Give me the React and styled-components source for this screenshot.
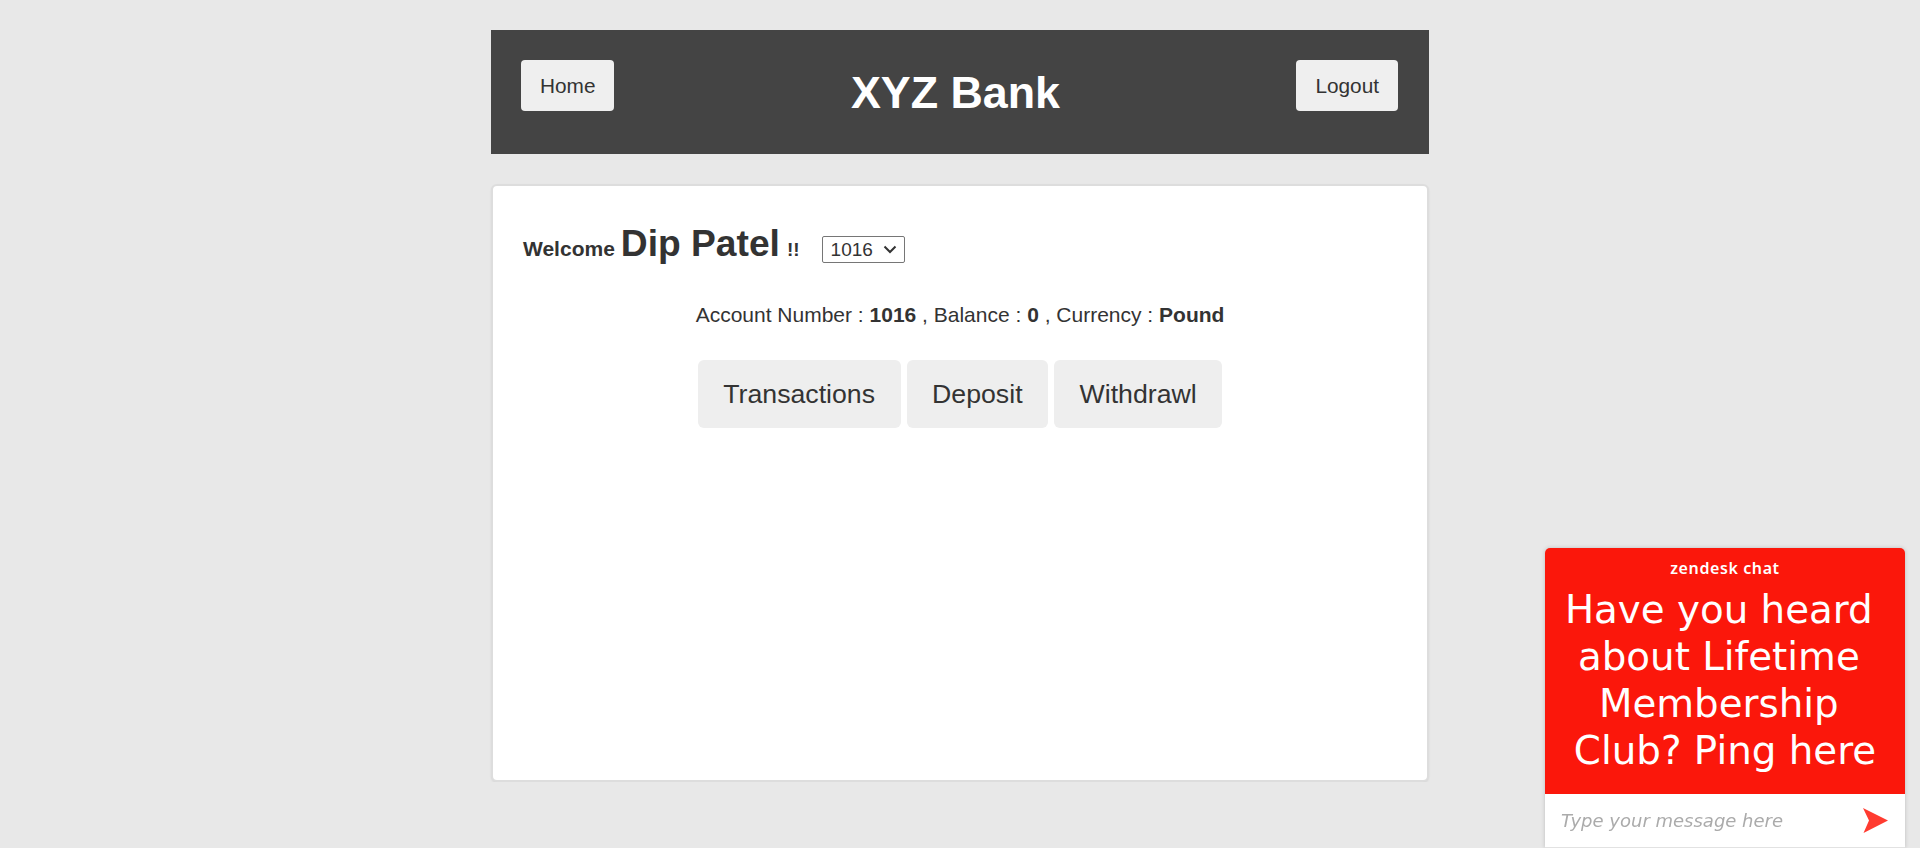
import React from "react";
import styled, { createGlobalStyle } from "styled-components";

const GlobalStyle = createGlobalStyle`
  html, body {
    margin: 0;
    padding: 0;
    background: #e8e8e8;
    font-family: "Liberation Sans", Arial, sans-serif;
    color: #333;
  }
`;

const Page = styled.div`
  width: 938px;
  margin: 30px auto 0;
`;

const Header = styled.header`
  height: 124px;
  background: #444444;
  display: flex;
  align-items: flex-start;
  padding: 30px 31px 0 30px;
  box-sizing: border-box;
`;

const HeaderButton = styled.button`
  height: 51px;
  padding: 0 19px;
  border: none;
  border-radius: 4px;
  background: #efefef;
  color: #333;
  font-family: "Liberation Sans", Arial, sans-serif;
  font-size: 20.8px;
  cursor: pointer;
`;

const Title = styled.h1`
  flex: 1;
  margin: 0;
  align-self: center;
  margin-top: -30px;
  text-align: center;
  color: #fff;
  font-size: 44.8px;
  font-weight: 700;
`;

const Card = styled.main`
  margin-top: 30px;
  height: 598px;
  box-sizing: border-box;
  background: #fff;
  border: 2px solid #dddddd;
  border-radius: 6px;
  box-shadow: 0 1px 2px rgba(0, 0, 0, 0.08);
  padding: 36px 30px;
`;

const WelcomeRow = styled.div`
  display: flex;
  align-items: baseline;
  font-weight: 700;
`;

const Small = styled.span`
  font-size: ${(p) => p.$size || 20}px;
  margin-right: ${(p) => p.$gap || 0}px;
`;

const Name = styled.span`
  font-size: 37.2px;
  margin-right: 7px;
`;

const chevron =
  "data:image/svg+xml;utf8,<svg xmlns='http://www.w3.org/2000/svg' width='14' height='9' viewBox='0 0 14 9'><polyline points='1.5,1.5 7,7 12.5,1.5' fill='none' stroke='%23333' stroke-width='2'/></svg>";

const AccountSelect = styled.select`
  appearance: none;
  -webkit-appearance: none;
  margin-left: 22px;
  width: 83px;
  height: 27px;
  box-sizing: border-box;
  font-family: "Liberation Sans", Arial, sans-serif;
  font-size: 19px;
  font-weight: 400;
  color: #333;
  background: #fff url("${chevron}") no-repeat right 7px center;
  border: 1px solid #767676;
  border-radius: 2px;
  padding: 0 0 0 8px;
`;

const Center = styled.div`
  display: flex;
  flex-direction: column;
  align-items: center;
  margin-top: 38px;
`;

const Info = styled.div`
  font-size: 21px;
  color: #333;
`;

const ActionRow = styled.div`
  display: flex;
  gap: 6px;
  margin-top: 33px;
`;

const ActionButton = styled.button`
  height: 68px;
  padding: 0 25.5px;
  border: none;
  border-radius: 6px;
  background: #eeeeee;
  color: #333;
  font-family: "Liberation Sans", Arial, sans-serif;
  font-size: 26.7px;
  cursor: pointer;
`;

const Widget = styled.div`
  position: fixed;
  right: 15px;
  bottom: 0;
  width: 360px;
  border-radius: 5px 5px 0 0;
  overflow: hidden;
  box-shadow: 0 0 4px rgba(0, 0, 0, 0.18);
`;

const WidgetTop = styled.div`
  background: #fb170b;
  height: 246px;
  box-sizing: border-box;
  padding-top: 10px;
  color: #fff;
  text-align: center;
`;

const Logo = styled.div`
  font-family: "Noto Sans", sans-serif;
  font-weight: 600;
  font-size: 16px;
  line-height: 20px;
  letter-spacing: 0.6px;
`;

const Headline = styled.div`
  margin-top: 8px;
  font-family: "DejaVu Sans", Verdana, sans-serif;
  font-size: 38.8px;
  line-height: 47px;
  white-space: pre;
`;

const InputBar = styled.div`
  height: 54px;
  background: #fff;
  display: flex;
  align-items: center;
  padding: 0 17px 0 16px;
  border-bottom: 1px solid #e2e2e2;
  box-sizing: border-box;
`;

const MessageInput = styled.input`
  flex: 1;
  border: none;
  outline: none;
  padding: 0;
  background: transparent;
  font-family: "DejaVu Sans", Verdana, sans-serif;
  font-size: 18px;
  font-style: italic;
  color: #333;
  &::placeholder {
    color: #ababab;
    font-style: italic;
  }
`;

const SendIcon = () => (
  <svg width="25" height="25" viewBox="0 0 25 25" aria-hidden="true">
    <polygon points="0,0 25,12.5 0.5,25 6,12.5" fill="#ff3b30" />
  </svg>
);

export default function App() {
  return (
    <>
      <GlobalStyle />
      <Page>
        <Header>
          <HeaderButton>Home</HeaderButton>
          <Title>XYZ Bank</Title>
          <HeaderButton>Logout</HeaderButton>
        </Header>
        <Card>
          <WelcomeRow>
            <Small $size={21} $gap={6}>Welcome</Small>
            <Name>Dip Patel</Name>
            <Small $size={19}>!!</Small>
            <AccountSelect defaultValue="1016">
              <option value="1016">1016</option>
            </AccountSelect>
          </WelcomeRow>
          <Center>
            <Info>
              Account Number : <b>1016</b> , Balance : <b>0</b> , Currency : <b>Pound</b>
            </Info>
            <ActionRow>
              <ActionButton>Transactions</ActionButton>
              <ActionButton>Deposit</ActionButton>
              <ActionButton>Withdrawl</ActionButton>
            </ActionRow>
          </Center>
        </Card>
      </Page>
      <Widget>
        <WidgetTop>
          <Logo>zendesk chat</Logo>
          <Headline>
            {"Have you heard \nabout Lifetime \nMembership \nClub? Ping here"}
          </Headline>
        </WidgetTop>
        <InputBar>
          <MessageInput placeholder="Type your message here" />
          <SendIcon />
        </InputBar>
      </Widget>
    </>
  );
}
